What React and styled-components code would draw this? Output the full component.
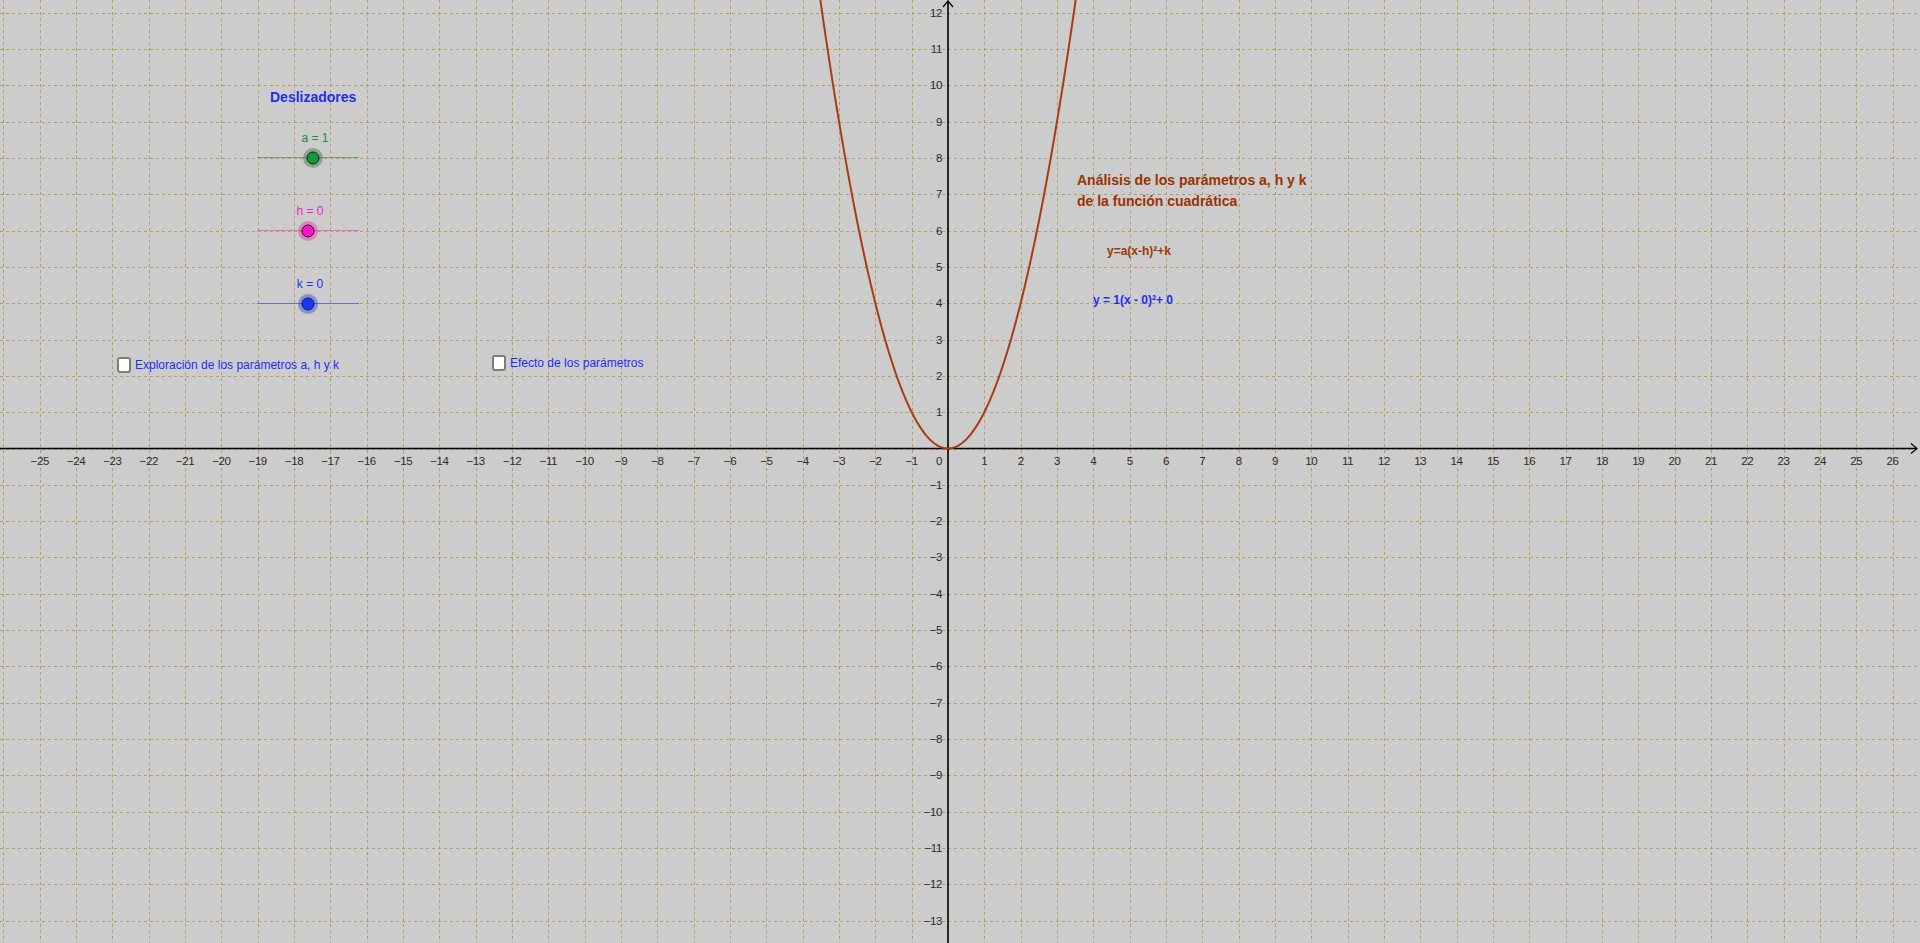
import React from "react"
import styled, { createGlobalStyle } from "styled-components"

// graphics view geometry (pixels per unit and origin)
const W = 1920
const H = 943
const U = 36.33
const OX = 948
const OY = 448.5

const px = (x) => OX + x * U
const py = (y) => OY - y * U
const crisp = (v) => Math.round(v) + 0.5
const num = (n) => (n < 0 ? "\u2212" + Math.abs(n) : String(n))
const range = (a, b) => Array.from({ length: b - a + 1 }, (_, i) => a + i)

const parabolaPath = () => {
  const pts = []
  for (let x = -3.6; x <= 3.6001; x += 0.02) {
    pts.push(`${px(x).toFixed(2)},${py(x * x).toFixed(2)}`)
  }
  return "M" + pts.join("L")
}

const sliders = [
  { name: "a", value: 1, y: 157, knob: 56, text: "#1b8a3c", track: "#7a9a80", fill: "#0c9a3a", halo: "rgba(40,110,60,0.4)" },
  { name: "h", value: 0, y: 230, knob: 51, text: "#f01cc8", track: "#e070c8", fill: "#ff10cc", halo: "rgba(220,40,170,0.4)" },
  { name: "k", value: 0, y: 303, knob: 51, text: "#2233e8", track: "#6a70c8", fill: "#1c34ff", halo: "rgba(30,50,230,0.4)" },
]

const GlobalStyle = createGlobalStyle`
  html, body {
    margin: 0;
    padding: 0;
    overflow: hidden;
    background: #cccccc;
  }
`

const App = () => {
  return (
    <>
      <GlobalStyle />
      <Canvas>
        <Drawing width={W} height={H} viewBox={`0 0 ${W} ${H}`}>
          {range(-26, 26).map((i) => (
            <GridLine key={"v" + i} x1={crisp(px(i))} x2={crisp(px(i))} y1={0} y2={H} />
          ))}
          {range(-13, 12).map((j) => (
            <GridLine key={"h" + j} x1={0} x2={W} y1={crisp(py(j))} y2={crisp(py(j))} />
          ))}

          <Axis x1={0} x2={W - 3} y1={OY} y2={OY} />
          <Axis x1={OX} x2={OX} y1={H} y2={1} />
          <Arrow points={`${W - 9},${OY - 5} ${W - 3},${OY} ${W - 9},${OY + 5}`} />
          <Arrow points={`${OX - 5},7 ${OX},1 ${OX + 5},7`} />

          {range(-25, 26).filter((i) => i !== 0).map((i) => (
            <AxisLabel key={"lx" + i} x={px(i)} y={OY + 16} textAnchor="middle">
              {num(i)}
            </AxisLabel>
          ))}
          <AxisLabel x={OX - 9} y={OY + 16} textAnchor="middle">0</AxisLabel>
          {range(-13, 12).filter((j) => j !== 0).map((j) => (
            <AxisLabel key={"ly" + j} x={OX - 6} y={py(j) + 4} textAnchor="end">
              {num(j)}
            </AxisLabel>
          ))}

          <Curve d={parabolaPath()} />
        </Drawing>

        <Heading>Deslizadores</Heading>

        {sliders.map((s) => (
          <Slider key={s.name} $y={s.y}>
            <SliderLabel $color={s.text} style={{ left: s.knob + 2 }}>
              {s.name} = {s.value}
            </SliderLabel>
            <Track $color={s.track} />
            <Knob $fill={s.fill} $halo={s.halo} style={{ left: s.knob }} />
          </Slider>
        ))}

        <CheckRow $x={117} $y={357}>
          <Box />
          <CheckText>Exploración de los parámetros a, h y k</CheckText>
        </CheckRow>
        <CheckRow $x={492} $y={355}>
          <Box />
          <CheckText>Efecto de los parámetros</CheckText>
        </CheckRow>

        <Title>
          Análisis de los parámetros a, h y k
          <br />
          de la función cuadrática
        </Title>
        <Formula $x={1107} $y={243} $color="#9a3a0c">y=a(x-h)²+k</Formula>
        <Formula $x={1093} $y={292} $color="#1c2cff">y = 1(x - 0)²+ 0</Formula>
      </Canvas>
    </>
  )
}
export default App

const Canvas = styled.div`
  position: relative;
  width: ${W}px;
  height: ${H}px;
  overflow: hidden;
  background: #cccccc;
  font-family: "Liberation Sans", Arial, sans-serif;
`

const Drawing = styled.svg`
  position: absolute;
  left: 0;
  top: 0;
  display: block;
`

const GridLine = styled.line`
  stroke: #b89a62;
  stroke-width: 1;
  stroke-dasharray: 3 3;
  shape-rendering: crispEdges;
`

const Axis = styled.line`
  stroke: #000;
  stroke-width: 1.6;
`

const Arrow = styled.polyline`
  fill: none;
  stroke: #000;
  stroke-width: 1.2;
`

const AxisLabel = styled.text`
  font-family: "Liberation Sans", Arial, sans-serif;
  font-size: 11.5px;
  letter-spacing: -0.4px;
  fill: #2b2b2b;
`

const Curve = styled.path`
  fill: none;
  stroke: #a83c12;
  stroke-width: 2;
  stroke-linejoin: round;
`

const Heading = styled.div`
  position: absolute;
  left: 270px;
  top: 88px;
  font-size: 14px;
  line-height: 18px;
  font-weight: bold;
  color: #1f2ef0;
`

const Slider = styled.div`
  position: absolute;
  left: 257px;
  top: ${(p) => p.$y - 26}px;
  width: 102px;
  height: 40px;
`

const SliderLabel = styled.div`
  position: absolute;
  top: 0;
  transform: translateX(-50%);
  white-space: nowrap;
  font-size: 12px;
  line-height: 14px;
  color: ${(p) => p.$color};
`

const Track = styled.div`
  position: absolute;
  left: 0;
  right: 0;
  top: 26px;
  height: 1px;
  background: ${(p) => p.$color};
`

const Knob = styled.div`
  position: absolute;
  top: 26.5px;
  width: 13px;
  height: 13px;
  box-sizing: border-box;
  border-radius: 50%;
  border: 1.3px solid #1a1a1a;
  background: ${(p) => p.$fill};
  box-shadow: 0 0 0 3.5px ${(p) => p.$halo};
  transform: translate(-50%, -50%);
`

const CheckRow = styled.div`
  position: absolute;
  left: ${(p) => p.$x}px;
  top: ${(p) => p.$y}px;
  display: flex;
  align-items: center;
  gap: 4px;
`

const Box = styled.div`
  width: 14px;
  height: 16px;
  box-sizing: border-box;
  border: 2px solid #7c7c7c;
  border-radius: 3px;
  background: #ffffff;
`

const CheckText = styled.span`
  font-size: 12px;
  line-height: 16px;
  color: #1c2cff;
  white-space: nowrap;
`

const Title = styled.div`
  position: absolute;
  left: 1077px;
  top: 170px;
  font-size: 14px;
  line-height: 21px;
  font-weight: bold;
  color: #993300;
  white-space: nowrap;
`

const Formula = styled.div`
  position: absolute;
  left: ${(p) => p.$x}px;
  top: ${(p) => p.$y}px;
  font-size: 12px;
  line-height: 16px;
  font-weight: bold;
  color: ${(p) => p.$color};
  white-space: nowrap;
`
